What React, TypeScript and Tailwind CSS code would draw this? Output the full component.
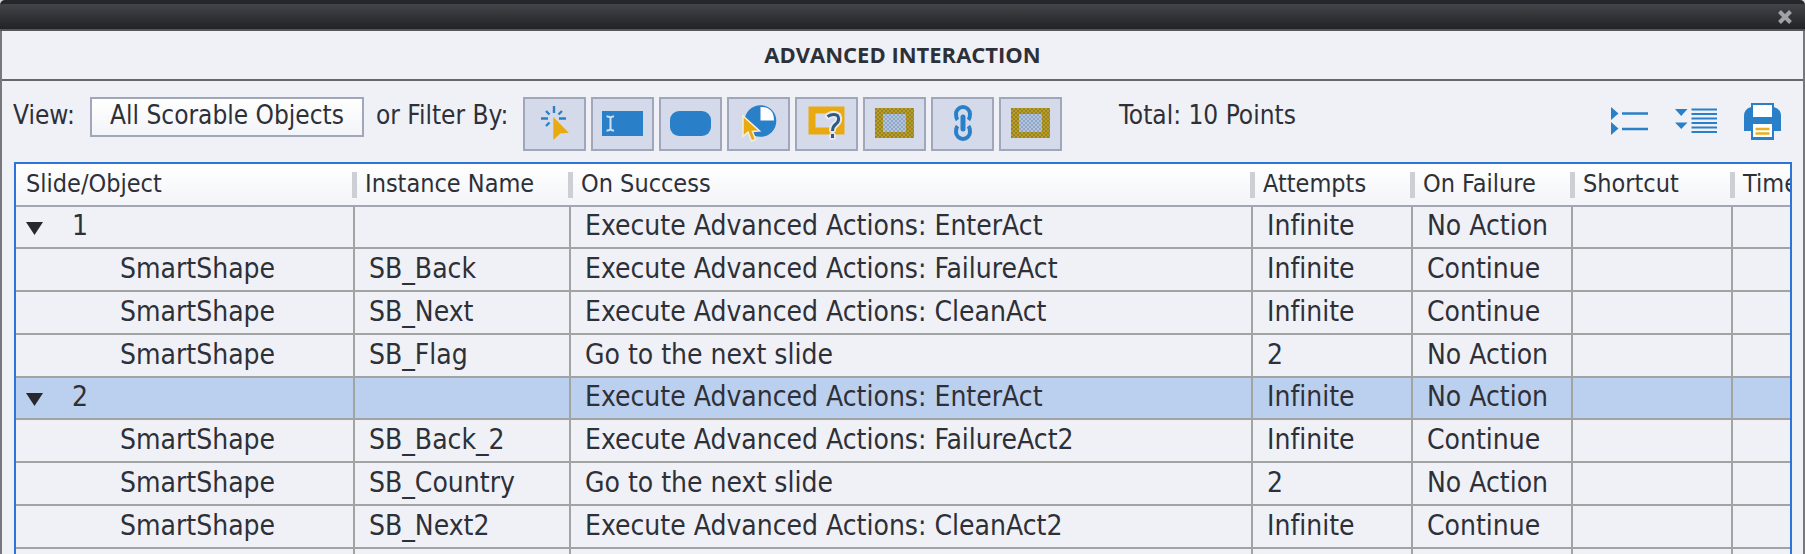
import React from 'react';

type Row = {
  id: number;
  group?: boolean;
  selected?: boolean;
  object: string;
  instance: string;
  success: string;
  attempts: string;
  failure: string;
};

const ROWS: Row[] = [
  { id: 1, group: true, object: '1', instance: '', success: 'Execute Advanced Actions: EnterAct', attempts: 'Infinite', failure: 'No Action' },
  { id: 2, object: 'SmartShape', instance: 'SB_Back', success: 'Execute Advanced Actions: FailureAct', attempts: 'Infinite', failure: 'Continue' },
  { id: 3, object: 'SmartShape', instance: 'SB_Next', success: 'Execute Advanced Actions: CleanAct', attempts: 'Infinite', failure: 'Continue' },
  { id: 4, object: 'SmartShape', instance: 'SB_Flag', success: 'Go to the next slide', attempts: '2', failure: 'No Action' },
  { id: 5, group: true, selected: true, object: '2', instance: '', success: 'Execute Advanced Actions: EnterAct', attempts: 'Infinite', failure: 'No Action' },
  { id: 6, object: 'SmartShape', instance: 'SB_Back_2', success: 'Execute Advanced Actions: FailureAct2', attempts: 'Infinite', failure: 'Continue' },
  { id: 7, object: 'SmartShape', instance: 'SB_Country', success: 'Go to the next slide', attempts: '2', failure: 'No Action' },
  { id: 8, object: 'SmartShape', instance: 'SB_Next2', success: 'Execute Advanced Actions: CleanAct2', attempts: 'Infinite', failure: 'Continue' },
];

const COLUMNS = ['Slide/Object', 'Instance Name', 'On Success', 'Attempts', 'On Failure', 'Shortcut', 'Time'];

const ClickBoxIcon = () => (
  <svg width="28" height="36" viewBox="0 0 28 36" aria-hidden="true">
    <path d="M13 1v7M0 13.500h7M18 13.500h7M5 6l3.500 3.500M21 6l-3.500 3.500M5 21l3.500-3.500" stroke="#2a80c8" strokeWidth="2.400" fill="none" />
    <path d="M12.300 12V35l7-6.500 8.500-.8z" fill="#e8aa10" />
  </svg>
);

const TextEntryIcon = () => (
  <svg width="41" height="25" viewBox="0 0 41 25" aria-hidden="true">
    <rect width="41" height="25" fill="#2a80c8" />
    <path d="M4.500 5.500Q7.500 5 8.500 7Q9.500 5 12 5.500M8.500 7v11M4.500 19.500Q7.500 20 8.500 18Q9.500 20 12 19.500" stroke="#cfe0f2" strokeWidth="2" fill="none" />
  </svg>
);

const ButtonIcon = () => (
  <svg width="41" height="25" viewBox="0 0 41 25" aria-hidden="true">
    <rect width="41" height="25" rx="9" fill="#2a80c8" />
  </svg>
);

const HotSpotIcon = () => (
  <svg width="36" height="38" viewBox="0 0 36 38" aria-hidden="true">
    <circle cx="19.500" cy="17" r="15.800" fill="#2a80c8" />
    <path d="M19.500 3v13.500H33Q33 3 19.500 3z" fill="#fff" />
    <path d="M2 12v20.500l5-4.500 3.500 9 4-1.500-3-8 7-.5z" fill="#e8aa10" stroke="#f5eedb" strokeWidth="1.500" />
  </svg>
);

const QuestionIcon = () => (
  <svg width="38" height="34" viewBox="0 0 38 34" aria-hidden="true">
    <rect x="4" y="4" width="29" height="21" fill="#d5daea" stroke="#e8aa10" strokeWidth="7" />
    <g fill="none" stroke="#e6e9f2" strokeWidth="7" strokeLinecap="round">
      <path d="M20.500 10Q26 6.500 30 10q2 4.500-2 8-3.500 2.500-3.500 5.500" />
      <path d="M24.500 30v1" />
    </g>
    <path d="M19.500 10.500Q25 7 29.500 9.500 32.500 14 28 18 24.500 20.500 24.500 25M24.500 28v4" fill="none" stroke="#30597f" strokeWidth="3" />
  </svg>
);

const PatternBoxIcon = ({ id }: { id: string }) => (
  <svg width="39" height="30" viewBox="0 0 39 30" aria-hidden="true">
    <defs>
      <pattern id={`${id}-edge`} width="4" height="4" patternUnits="userSpaceOnUse">
        <rect width="4" height="4" fill="#c29a1c" />
        <path d="M0 0h2v2H0zM2 2h2v2H2z" fill="#8f8630" />
      </pattern>
      <pattern id={`${id}-fill`} width="4" height="4" patternUnits="userSpaceOnUse">
        <rect width="4" height="4" fill="#b4c4dc" />
        <path d="M0 0h2v2H0zM2 2h2v2H2z" fill="#8fa8c8" />
      </pattern>
    </defs>
    <rect width="39" height="30" fill={`url(#${id}-edge)`} />
    <rect x="8" y="6" width="23" height="18" fill={`url(#${id}-fill)`} />
  </svg>
);

const LinkIcon = () => (
  <svg width="20" height="38" viewBox="0 0 20 38" aria-hidden="true">
    <g fill="none" stroke="#2a80c8" strokeWidth="4">
      <path d="M4.500 16Q3 14 3 10a7 7 0 0 1 14 0q0 4-1.500 6" />
      <path d="M4.500 22Q3 24 3 28a7 7 0 0 0 14 0q0-4-1.500-6" />
      <path d="M10 13v12" strokeWidth="5" strokeLinecap="round" />
    </g>
  </svg>
);

const CollapseIcon = () => (
  <svg width="37" height="28" viewBox="0 0 37 28" aria-hidden="true">
    <path d="M0 0l7.500 6.500L0 13zM0 15l7.500 6.500L0 28z" fill="#2a80c8" />
    <path d="M11 6.500h26M11 22h26" stroke="#2a80c8" strokeWidth="2.400" />
  </svg>
);

const ExpandIcon = () => (
  <svg width="42" height="26" viewBox="0 0 42 26" aria-hidden="true">
    <path d="M0 1h12.500L6.200 8zM0 14.500h12.500L6.200 21z" fill="#2a80c8" />
    <path d="M16.500 1.500H42M16.500 6H42M16.500 10.500H42M16.500 15H42M16.500 19.500H42M16.500 24H42" stroke="#2a80c8" strokeWidth="2.200" />
  </svg>
);

const PrintIcon = () => (
  <svg width="37" height="37" viewBox="0 0 37 37" aria-hidden="true">
    <path d="M7 0h23v4q7 2 7 9v15h-7v9H7v-9H0V13Q0 6 7 4z" fill="#2a80c8" />
    <path d="M9 2h19v12H9zM9 21h19v13H9z" fill="#fff" />
    <path d="M11.500 26h14M11.500 30.500h14" stroke="#e8b020" strokeWidth="2.400" />
  </svg>
);

const FILTERS = [
  { label: 'Click boxes', icon: <ClickBoxIcon /> },
  { label: 'Text entry boxes', icon: <TextEntryIcon /> },
  { label: 'Buttons', icon: <ButtonIcon /> },
  { label: 'Hot spots', icon: <HotSpotIcon /> },
  { label: 'Questions', icon: <QuestionIcon /> },
  { label: 'Drag and drop', icon: <PatternBoxIcon id="drag" /> },
  { label: 'Links', icon: <LinkIcon /> },
  { label: 'Widgets', icon: <PatternBoxIcon id="widget" /> },
];

const App: React.FC = () => {
  return (
    <div className="flex h-screen flex-col overflow-hidden bg-[#f0f1f7] font-['DejaVu_Sans_Condensed','Noto_Sans',sans-serif] text-[#2e3038] [font-variant-ligatures:none]">
      {/* Title bar */}
      <div className="bg-[#d9dade]">
        <div className="flex h-[31px] items-center justify-end rounded-t-[5px] border-t-4 border-b-2 border-t-[#25272c] border-b-[#54565a] bg-gradient-to-b from-[#424549] to-[#212326] pr-3">
          <button aria-label="Close">
            <svg width="16" height="14" viewBox="0 0 16 14" aria-hidden="true">
              <path d="M2.500 1.500l11 11M13.500 1.500l-11 11" stroke="#a0a2a6" strokeWidth="4" />
            </svg>
          </button>
        </div>
      </div>

      <div className="flex min-h-0 flex-1 flex-col border-x-2 border-[#77787c]">
        <h1 className="flex h-[50px] items-center justify-center border-b-2 border-[#66676b] pb-[2px] font-['Open_Sans',sans-serif] text-[22px] font-bold">
          ADVANCED INTERACTION
        </h1>

        {/* Toolbar */}
        <div className="flex h-[81px] shrink-0 items-start pt-4 pr-[22px] pl-[11px] text-[26px] whitespace-nowrap">
          <label htmlFor="view" className="w-[77px] leading-[36px]">View:</label>
          <select
            id="view"
            className="h-10 w-[274px] appearance-none border-2 border-[#a0a7ba] bg-gradient-to-b from-white to-[#f3f4f8] pb-1 pl-[18px] leading-[32px]"
          >
            <option>All Scorable Objects</option>
          </select>
          <span className="w-[159px] pl-3 leading-[36px]">or Filter By:</span>
          <div className="flex gap-[5px]">
            {FILTERS.map((filter) => (
              <button
                key={filter.label}
                aria-label={filter.label}
                className="flex h-[54px] w-[63px] items-center justify-center border-2 border-[#a0a7ba] bg-[#d5daea] pb-[2px]"
              >
                {filter.icon}
              </button>
            ))}
          </div>
          <span className="pl-[57px] leading-[36px]">Total: 10 Points</span>
          <div className="ml-auto flex h-[48px] items-center gap-[27px]">
            <button aria-label="Collapse all"><CollapseIcon /></button>
            <button aria-label="Expand all"><ExpandIcon /></button>
            <button aria-label="Print"><PrintIcon /></button>
          </div>
        </div>

        {/* Objects table */}
        <div className="mr-[11px] ml-3 min-h-0 flex-1 overflow-hidden border-2 border-b-0 border-[#2d73dc]">
          <table className="w-full table-fixed border-separate border-spacing-0 text-left whitespace-nowrap">
            <colgroup>
              <col className="w-[339px]" />
              <col className="w-[216px]" />
              <col />
              <col className="w-[160px]" />
              <col className="w-[160px]" />
              <col className="w-[160px]" />
              <col className="w-[57px]" />
            </colgroup>
            <thead className="text-[25px] leading-[32px]">
              <tr className="h-[43px] bg-gradient-to-b from-white to-[#f3f4f8]">
                {COLUMNS.map((name, i) => (
                  <th key={name} className="border-b-2 border-[#a3a5b2] p-0 pl-[10px] font-normal last:overflow-hidden">
                    <div className="flex items-center justify-between">
                      <span className="pb-[2px]">{name}</span>
                      {i < COLUMNS.length - 1 && <span className="-mr-[2px] h-[26px] w-[5px] bg-[#cdcfd5]" />}
                    </div>
                  </th>
                ))}
              </tr>
            </thead>
            <tbody className="text-[28px] leading-[32px] [&_td]:border-r-2 [&_td]:border-b-2 [&_td]:border-[#a2a3a3] [&_td]:p-0 [&_td]:pb-[2px] [&_td]:pl-[14px] [&_td:last-child]:border-r-0">
              {ROWS.map((row) => (
                <tr
                  key={row.id}
                  className={`${row.group ? 'h-[42px]' : 'h-[43px]'} ${row.selected ? 'bg-[#bbcfee]' : ''}`}
                >
                  <td>
                    {row.group ? (
                      <div className="-ml-1 flex items-center">
                        <button aria-label={`Toggle slide ${row.object}`} className="flex h-8 w-[46px] items-center pt-1">
                          <svg width="17" height="13" viewBox="0 0 17 13" aria-hidden="true">
                            <path d="M0 0h17L8.500 13z" fill="#27282e" />
                          </svg>
                        </button>
                        {row.object}
                      </div>
                    ) : (
                      <span className="pl-[90px]">{row.object}</span>
                    )}
                  </td>
                  <td>{row.instance}</td>
                  <td>{row.success}</td>
                  <td>{row.attempts}</td>
                  <td>{row.failure}</td>
                  <td />
                  <td />
                </tr>
              ))}
              <tr className="h-[42px]">
                {COLUMNS.map((name) => <td key={name} />)}
              </tr>
            </tbody>
          </table>
        </div>
      </div>
    </div>
  );
};

export default App;
